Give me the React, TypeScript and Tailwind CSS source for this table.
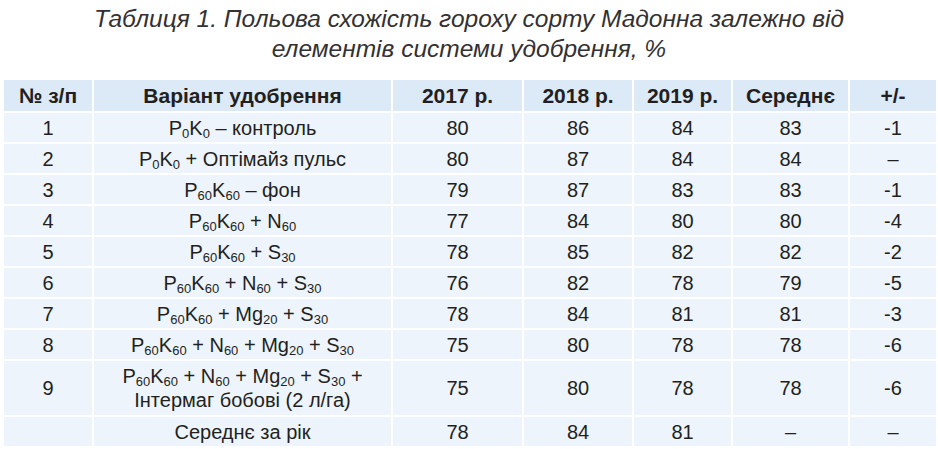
import type { ReactNode } from "react"

type Row = {
  n: string
  variant: ReactNode
  y2017: string
  y2018: string
  y2019: string
  avg: string
  diff: string
  tall?: boolean
}

const S = ({ children }: { children: ReactNode }) => (
  <sub className="text-[13px]">{children}</sub>
)

const PK60 = (
  <>
    P<S>60</S>K<S>60</S>
  </>
)

const rows: Row[] = [
  { n: "1", variant: <>P<S>0</S>K<S>0</S> – контроль</>, y2017: "80", y2018: "86", y2019: "84", avg: "83", diff: "-1" },
  { n: "2", variant: <>P<S>0</S>K<S>0</S> + Оптімайз пульс</>, y2017: "80", y2018: "87", y2019: "84", avg: "84", diff: "–" },
  { n: "3", variant: <>{PK60} – фон</>, y2017: "79", y2018: "87", y2019: "83", avg: "83", diff: "-1" },
  { n: "4", variant: <>{PK60} + N<S>60</S></>, y2017: "77", y2018: "84", y2019: "80", avg: "80", diff: "-4" },
  { n: "5", variant: <>{PK60} + S<S>30</S></>, y2017: "78", y2018: "85", y2019: "82", avg: "82", diff: "-2" },
  { n: "6", variant: <>{PK60} + N<S>60</S> + S<S>30</S></>, y2017: "76", y2018: "82", y2019: "78", avg: "79", diff: "-5" },
  { n: "7", variant: <>{PK60} + Mg<S>20</S> + S<S>30</S></>, y2017: "78", y2018: "84", y2019: "81", avg: "81", diff: "-3" },
  { n: "8", variant: <>{PK60} + N<S>60</S> + Mg<S>20</S> + S<S>30</S></>, y2017: "75", y2018: "80", y2019: "78", avg: "78", diff: "-6" },
  {
    n: "9",
    variant: (
      <>
        {PK60} + N<S>60</S> + Mg<S>20</S> + S<S>30</S> +
        <br />
        Інтермаг бобові (2 л/га)
      </>
    ),
    y2017: "75",
    y2018: "80",
    y2019: "78",
    avg: "78",
    diff: "-6",
    tall: true,
  },
  { n: "", variant: "Середнє за рік", y2017: "78", y2018: "84", y2019: "81", avg: "–", diff: "–" },
]

const headers = ["№ з/п", "Варіант удобрення", "2017 р.", "2018 р.", "2019 р.", "Середнє", "+/-"]

export default function App() {
  return (
    <div className="w-[938px] h-[449px] bg-white text-[#231f20] font-['Liberation_Sans',Arial,sans-serif] overflow-hidden">
      <h1 className="pt-[4px] text-center italic text-[24.5px] leading-[30px] text-[#333132] font-normal">
        Таблиця 1. Польова схожість гороху сорту Мадонна залежно від
        <br />
        елементів системи удобрення, %
      </h1>

      <table className="mt-[14px] ml-[2px] w-[934px] table-fixed border-collapse text-center">
        <colgroup>
          <col className="w-[90px]" />
          <col className="w-[299px]" />
          <col className="w-[131px]" />
          <col className="w-[110px]" />
          <col className="w-[99px]" />
          <col className="w-[117px]" />
          <col className="w-[88px]" />
        </colgroup>
        <thead>
          <tr className="h-[33px] bg-[#dce9f7]">
            {headers.map((h) => (
              <th key={h} className="border-2 border-white text-[21px] font-bold leading-none">
                {h}
              </th>
            ))}
          </tr>
        </thead>
        <tbody className="bg-[#edf4fc] text-[20px] leading-[24px]">
          {rows.map((r, i) => (
            <tr key={i} className={r.tall ? "h-[56px]" : "h-[31px]"}>
              <td className="border-2 border-white">{r.n}</td>
              <td className="border-2 border-white">{r.variant}</td>
              <td className="border-2 border-white">{r.y2017}</td>
              <td className="border-2 border-white">{r.y2018}</td>
              <td className="border-2 border-white">{r.y2019}</td>
              <td className="border-2 border-white">{r.avg}</td>
              <td className="border-2 border-white">{r.diff}</td>
            </tr>
          ))}
        </tbody>
      </table>
    </div>
  )
}
